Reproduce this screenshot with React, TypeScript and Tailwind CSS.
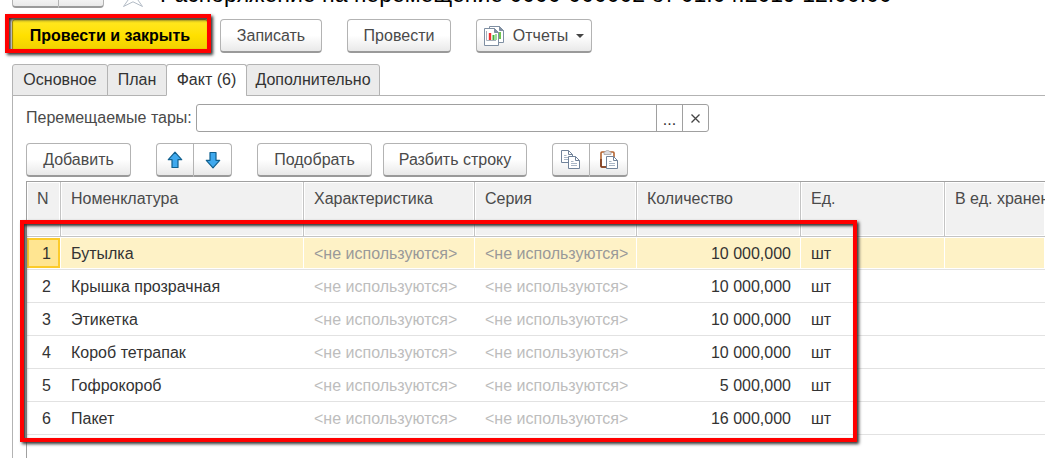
import type { ReactNode } from "react";

const rows = [
  { n: 1, name: "Бутылка", qty: "10 000,000" },
  { n: 2, name: "Крышка прозрачная", qty: "10 000,000" },
  { n: 3, name: "Этикетка", qty: "10 000,000" },
  { n: 4, name: "Короб тетрапак", qty: "10 000,000" },
  { n: 5, name: "Гофрокороб", qty: "5 000,000" },
  { n: 6, name: "Пакет", qty: "16 000,000" },
];

const tabs = [
  { label: "Основное", width: "w-24" },
  { label: "План", width: "w-[60px]" },
  { label: "Факт (6)", width: "w-[81px]" },
  { label: "Дополнительно", width: "w-[134px]" },
];
const columns = ["N", "Номенклатура", "Характеристика", "Серия", "Количество", "Ед.", "В ед. хранения"];

const face =
  "border border-[#b3b3b3] border-b-2 border-b-[#9a9a9a] bg-linear-to-b from-white from-50% to-[#e9e9e9] text-[#4a4a4a]";

function Button({ children, className = "" }: { children: ReactNode; className?: string }) {
  return (
    <button type="button" className={`flex h-[34px] shrink-0 items-center justify-center rounded-[4px] ${face} ${className}`}>
      {children}
    </button>
  );
}

function Pair({ left, right, labels }: { left: ReactNode; right: ReactNode; labels: [string, string] }) {
  return (
    <div className="flex h-[34px] w-[76px] shrink-0">
      <button type="button" aria-label={labels[0]} className={`flex w-1/2 items-center justify-center rounded-l-[4px] ${face}`}>
        {left}
      </button>
      <button type="button" aria-label={labels[1]} className={`flex w-1/2 items-center justify-center rounded-r-[4px] ${face} border-l-0`}>
        {right}
      </button>
    </div>
  );
}

function Arrow({ down = false }: { down?: boolean }) {
  return (
    <svg width="16" height="18" viewBox="0 0 16 18" className={down ? "rotate-180" : ""} aria-hidden="true">
      <path d="M8 1.2 L14.7 8.7 H11 V16.5 H5 V8.7 H1.3 Z" fill="#3fa9ee" stroke="#10608f" strokeWidth="1.2" strokeLinejoin="round" />
    </svg>
  );
}

function Sheet({ x, y }: { x: number; y: number }) {
  return (
    <g transform={`translate(${x} ${y})`}>
      <path d="M.5 .5 H7.5 L11.5 4.5 V12.5 H.5 Z" fill="#fff" stroke="#71839a" />
      <path d="M7.5 .5 V4.5 H11.5" fill="none" stroke="#71839a" />
      <path d="M3 5.5 H5.5 M3 7.5 H9 M3 9.5 H9" stroke="#a9b6c6" />
    </g>
  );
}

function CopyIcon() {
  return (
    <svg width="20" height="20" viewBox="0 0 20 20" aria-hidden="true">
      <Sheet x={0} y={0} />
      <Sheet x={7} y={6} />
    </svg>
  );
}

function PasteIcon() {
  return (
    <svg width="18" height="20" viewBox="0 0 18 20" aria-hidden="true">
      <rect x="1" y="2" width="13" height="15" rx="1" fill="#fff" stroke="#b4632f" strokeWidth="1.6" />
      <path d="M1 9 V16 Q1 17 2 17 H6" fill="none" stroke="#7c3c22" strokeWidth="1.6" />
      <path d="M4 4.5 V2.5 Q4 1.8 5 1.8 Q6 .5 7.5 .5 Q9 .5 10 1.8 Q11 1.8 11 2.5 V4.5 Z" fill="#dcdcdf" stroke="#a9a3a3" strokeWidth=".8" />
      <Sheet x={6} y={6} />
    </svg>
  );
}

function ReportIcon() {
  return (
    <svg width="21" height="20" viewBox="0 0 21 20" aria-hidden="true">
      <path d="M5.5 .5 H15.5 L19.5 4.5 V16.5 H5.5 Z" fill="#fff" stroke="#7f8fa2" />
      <path d="M15.5 .5 V4.5 H19.5 Z" fill="#7f8fa2" stroke="#7f8fa2" />
      <path d="M16 6 V13" stroke="#6fc552" strokeWidth="2" />
      <path d="M.5 2.5 H10.5 L14.5 6.5 V19.5 H.5 Z" fill="#fff" stroke="#7f8fa2" />
      <path d="M10.5 2.5 V6.5 H14.5 Z" fill="#7f8fa2" stroke="#7f8fa2" />
      <path d="M2.5 5 V14.5 H12" fill="none" stroke="#a7b0bb" />
      <path d="M6 7 V14" stroke="#ef3030" strokeWidth="2.4" />
      <path d="M9.5 9 V14" stroke="#3fb43a" strokeWidth="2" />
      <path d="M12 8 V14" stroke="#3fb43a" strokeWidth="1" />
    </svg>
  );
}

const frame =
  "pointer-events-none absolute border-4 border-[#ff0000] shadow-[2px_2px_3px_#333,inset_2px_2px_3px_#333]";

export default function App() {
  return (
    <div className="flex min-h-screen flex-col overflow-hidden bg-white font-['Liberation_Sans',Arial,sans-serif] text-[16px] leading-[20px] text-[#333]">
      <header className="flex h-2 items-end overflow-hidden pl-3">
        <div className="flex w-[92px] shrink-0">
          <button type="button" aria-label="Назад" className={`h-8 w-[47px] rounded-l-[4px] ${face}`} />
          <button type="button" aria-label="Вперед" className={`h-8 w-[45px] rounded-r-[4px] ${face} border-l-0`} />
        </div>
        <svg width="22" height="22" viewBox="0 0 22 22" className="ml-[18px] shrink-0" aria-hidden="true">
          <path d="M11 1 L13.8 8.2 L21.3 8.6 L15.5 13.4 L20.5 20.5 L11 15.8 L1.5 20.5 L6.5 13.4 L.7 8.6 L8.2 8.2 Z" fill="#fff" stroke="#b3bcc6" />
        </svg>
        <h1 className="ml-4 shrink-0 pb-[3px] text-[23px] leading-[22px] whitespace-nowrap text-black">
          Распоряжение на перемещение 0000-000002 от 01.04.2019 12:00:00
        </h1>
      </header>

      <div className="flex pt-[11px] pl-3">
        <div className="relative w-[196px] shrink-0">
          <button
            type="button"
            className="h-[33px] w-full rounded-[3px] border border-[#b89b00] bg-linear-to-b from-[#ffe81f] via-[#ffe000] to-[#efcf00] font-bold text-black"
          >
            Провести и закрыть
          </button>
          <div className={`${frame} -top-[5px] -right-[3px] bottom-0 -left-[7px]`} />
        </div>
        <Button className="ml-3 w-[102px]">Записать</Button>
        <Button className="ml-[25px] w-[104px]">Провести</Button>
        <Button className="ml-[25px] w-[116px]">
          <ReportIcon />
          <span className="ml-2">Отчеты</span>
          <svg width="8" height="4" viewBox="0 0 8 4" className="ml-2" aria-hidden="true">
            <path d="M0 0 H8 L4 4 Z" fill="#444" />
          </svg>
        </Button>
      </div>

      <div role="tablist" className="relative mt-[11px] -mb-px flex pl-3">
        {tabs.map((t, i) => (
          <button
            key={t.label}
            type="button"
            role="tab"
            aria-selected={i === 2}
            className={`h-8 shrink-0 rounded-t-[3px] border border-[#b3b3b3] whitespace-nowrap ${t.width} ${i > 0 ? "-ml-px" : ""} ${
              i === 2 ? "border-b-white bg-white" : "bg-[#ebebeb]"
            }`}
          >
            {t.label}
          </button>
        ))}
      </div>

      <main className="ml-3 flex flex-1 flex-col border-t border-l border-[#b3b3b3] pl-[13px]">
        <div className="flex items-center pt-2">
          <label htmlFor="tare" className="w-[170px] shrink-0 text-[#4a4a4a]">
            Перемещаемые тары:
          </label>
          <div className="flex h-7 w-[513px] rounded-[3px] border border-[#a0a0a0]">
            <input id="tare" type="text" className="min-w-0 flex-1 bg-transparent px-2 outline-none" />
            <button type="button" aria-label="Выбрать" className="flex w-[26px] items-center justify-center border-l border-[#a0a0a0]">
              <span className="pt-1">...</span>
            </button>
            <button type="button" aria-label="Очистить" className="flex w-[26px] items-center justify-center border-l border-[#a0a0a0]">
              <svg width="9" height="9" viewBox="0 0 9 9" aria-hidden="true">
                <path d="M.5 .5 L8.5 8.5 M8.5 .5 L.5 8.5" stroke="#444" strokeWidth="1.3" />
              </svg>
            </button>
          </div>
        </div>

        <div className="flex pt-[11px]">
          <Button className="w-[105px]">Добавить</Button>
          <div className="ml-[25px]">
            <Pair labels={["Вверх", "Вниз"]} left={<Arrow />} right={<Arrow down />} />
          </div>
          <Button className="ml-[25px] w-[115px]">Подобрать</Button>
          <Button className="ml-[11px] w-[144px]">Разбить строку</Button>
          <div className="ml-[25px]">
            <Pair labels={["Копировать", "Вставить"]} left={<CopyIcon />} right={<PasteIcon />} />
          </div>
        </div>

        <div className="relative mt-1 flex-1 border-t border-l border-[#a0a0a0]">
          <table className="w-full table-fixed border-separate border-spacing-0">
            <colgroup>
              <col className="w-[34px]" />
              <col className="w-[243px]" />
              <col className="w-[171px]" />
              <col className="w-[162px]" />
              <col className="w-[164px]" />
              <col className="w-[144px]" />
              <col />
            </colgroup>
            <thead>
              <tr className="h-[55px]">
                {columns.map((c) => (
                  <th
                    key={c}
                    scope="col"
                    className="overflow-hidden border-r border-b border-[#c4c4c4] bg-[#f1f1f1] pt-[7px] pl-[10px] text-left align-top font-normal whitespace-nowrap text-[#4a4a4a] shadow-[inset_1px_1px_#fff,inset_-1px_-1px_#fff] last:border-r-0"
                  >
                    {c}
                  </th>
                ))}
              </tr>
            </thead>
            <tbody>
              {rows.map((r) => {
                const sel = r.n === 1;
                const cell = `border-b border-[#e2e2e2] pt-[2px] pl-[10px] ${
                  sel ? "bg-[#fef2c6] shadow-[inset_0_1px_#fff,inset_-1px_-1px_#fff]" : ""
                }`;
                const muted = `${cell} whitespace-nowrap ${sel ? "text-[#999]" : "text-[#bdbdbd]"}`;
                return (
                  <tr key={r.n} className="h-[33px]">
                    <td className={`border-b border-[#e2e2e2] ${sel ? "py-px pr-px" : "pt-[2px] pr-[10px] text-right"}`}>
                      {sel ? (
                        <div className="flex h-[30px] items-center justify-end border-2 border-[#fccb2a] bg-[#ffe591] pt-[2px] pr-[7px]">{r.n}</div>
                      ) : (
                        r.n
                      )}
                    </td>
                    <td className={cell}>{r.name}</td>
                    <td className={muted}>&lt;не используются&gt;</td>
                    <td className={muted}>&lt;не используются&gt;</td>
                    <td className={`${cell} pr-[10px] text-right`}>{r.qty}</td>
                    <td className={cell}>шт</td>
                    <td className={cell} />
                  </tr>
                );
              })}
            </tbody>
          </table>
          <div className={`${frame} top-[38px] -left-[7px] h-[222px] w-[837px]`} />
        </div>
      </main>
    </div>
  );
}
